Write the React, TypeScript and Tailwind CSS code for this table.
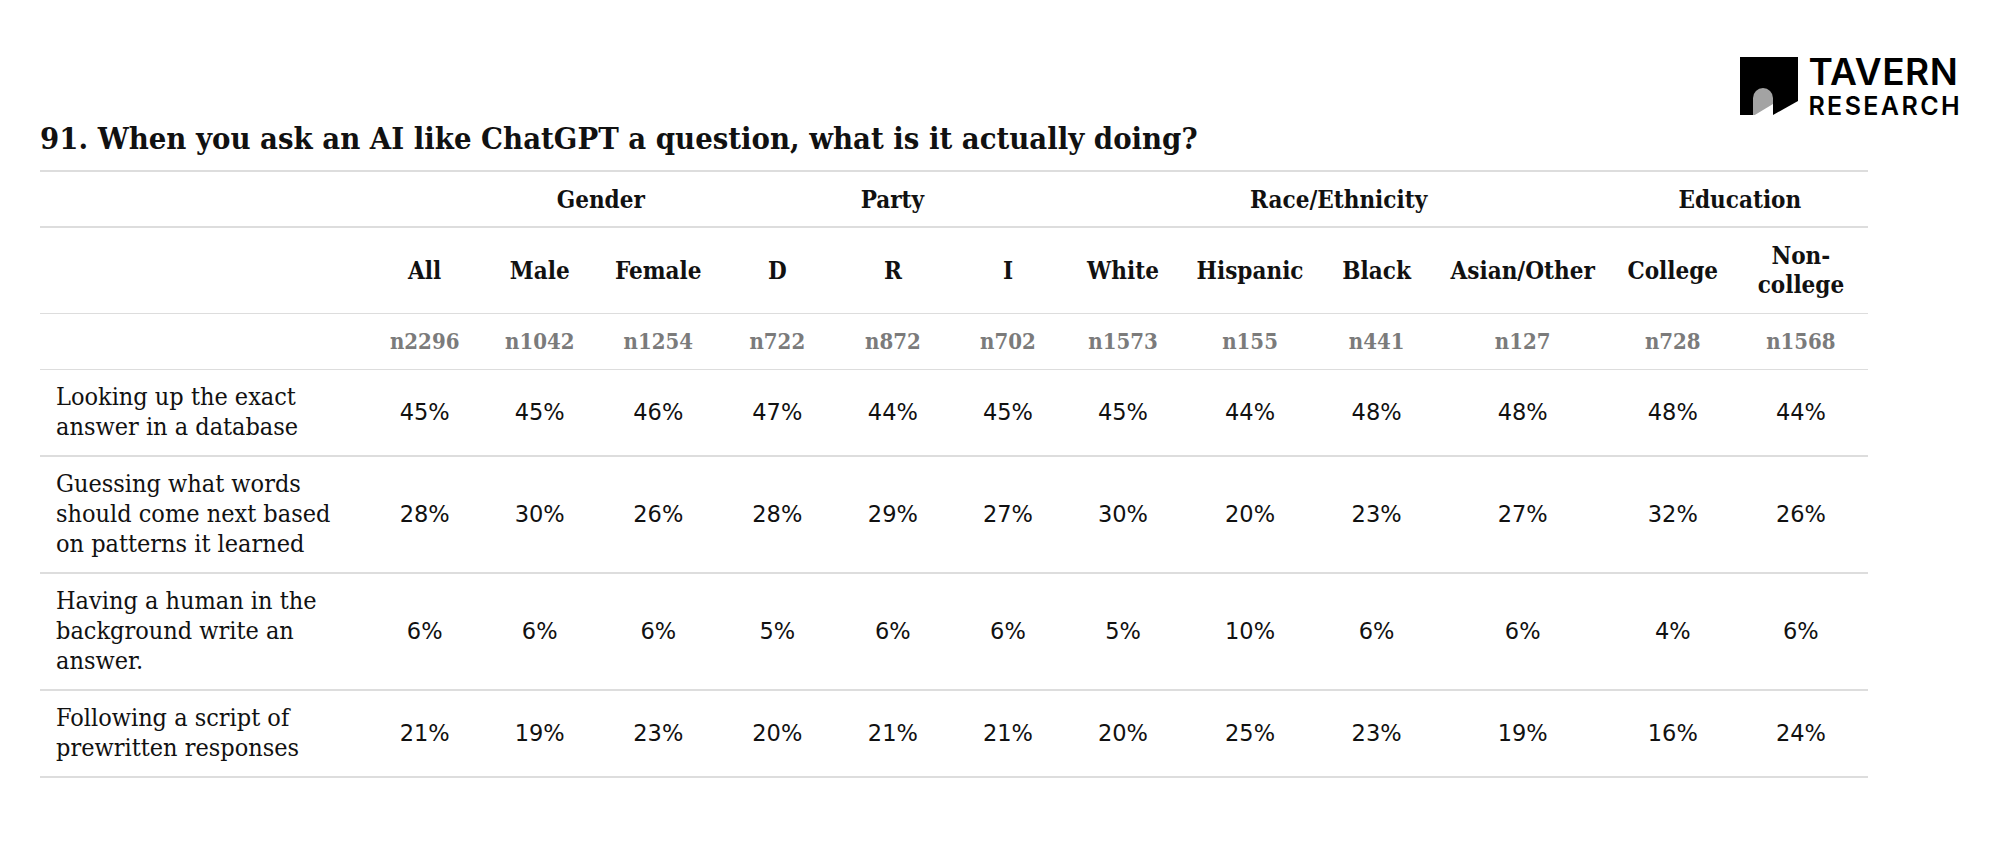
import React from "react";

const cols = [
  { key: "All", w: "w-[115px]" },
  { key: "Male", w: "w-[115px]" },
  { key: "Female", w: "w-[122px]" },
  { key: "D", w: "w-[116px]" },
  { key: "R", w: "w-[115px]" },
  { key: "I", w: "w-[115px]" },
  { key: "White", w: "w-[115px]" },
  { key: "Hispanic", w: "w-[139px]" },
  { key: "Black", w: "w-[114px]" },
  { key: "Asian/Other", w: "w-[178px]" },
  { key: "College", w: "w-[122px]" },
  { key: "Non-college", w: "w-[134px]" },
];

const ns = ["n2296", "n1042", "n1254", "n722", "n872", "n702", "n1573", "n155", "n441", "n127", "n728", "n1568"];

const rows: { label: string[]; vals: number[] }[] = [
  { label: ["Looking up the exact", "answer in a database"], vals: [45, 45, 46, 47, 44, 45, 45, 44, 48, 48, 48, 44] },
  { label: ["Guessing what words", "should come next based", "on patterns it learned"], vals: [28, 30, 26, 28, 29, 27, 30, 20, 23, 27, 32, 26] },
  { label: ["Having a human in the", "background write an", "answer."], vals: [6, 6, 6, 5, 6, 6, 5, 10, 6, 6, 4, 6] },
  { label: ["Following a script of", "prewritten responses"], vals: [21, 19, 23, 20, 21, 21, 20, 25, 23, 19, 16, 24] },
];

function Logo() {
  return (
    <div className="flex self-start items-center gap-[10px]">
      <svg width="58" height="58" viewBox="0 0 58 58">
        <polygon points="0,0 58,0 58,44 33,58 0,58" fill="#000" />
        <path d="M13,58 V41 A10,10 0 0 1 33,41 V58 Z" fill="#a3a3a3" />
        <polygon points="33,47 33,58.5 14,58.5" fill="#fff" />
      </svg>
      <div className="flex flex-col font-['Inter',sans-serif] text-black">
        <span className="text-[37px] leading-none font-semibold tracking-[0.5px]">TAVERN</span>
        <span className="mt-[3.6px] text-[25px] leading-none font-semibold tracking-[2.4px]">RESEARCH</span>
      </div>
    </div>
  );
}

const serif = "font-['DejaVu_Serif_Condensed','DejaVu_Serif',serif] font-stretch-condensed";

export default function App() {
  return (
    <div className={`w-[2008px] h-[852px] bg-white text-[#111] pt-[53px] pl-[40px] ${serif}`}>
      <div className="flex justify-between w-[1922px]">
        <h1 className="mt-[67px] text-[30.7px] leading-[36px] font-bold whitespace-nowrap">
          91. When you ask an AI like ChatGPT a question, what is it actually doing?
        </h1>
        <Logo />
      </div>
      <table className="mt-[14px] w-[1828px] table-fixed border-separate border-spacing-0">
        <colgroup>
          <col className="w-[327px]" />
          {cols.map((c) => (
            <col key={c.key} className={c.w} />
          ))}
        </colgroup>
        <thead>
          <tr className="text-[24px] leading-[29px] font-bold">
            <th className="border-t-2 border-b-2 border-[#dddddd] py-[12.5px]"></th>
            <th className="border-t-2 border-b-2 border-[#dddddd] py-[12.5px]"></th>
            <th colSpan={2} className="border-t-2 border-b-2 border-[#dddddd] py-[12.5px] text-center">Gender</th>
            <th colSpan={3} className="border-t-2 border-b-2 border-[#dddddd] py-[12.5px] text-center">Party</th>
            <th colSpan={4} className="border-t-2 border-b-2 border-[#dddddd] py-[12.5px] text-center">Race/Ethnicity</th>
            <th colSpan={2} className="border-t-2 border-b-2 border-[#dddddd] py-[12.5px] text-center">Education</th>
          </tr>
          <tr className="text-[24px] leading-[29px] font-bold">
            <th className="border-b border-[#dddddd] pt-[13px] pb-[13.5px]"></th>
            {cols.map((c) => (
              <th key={c.key} className="border-b border-[#dddddd] pt-[13px] pb-[13.5px] text-center align-middle whitespace-nowrap">
                {c.key === "Non-college" ? (
                  <>
                    Non-
                    <br />
                    college
                  </>
                ) : (
                  c.key
                )}
              </th>
            ))}
          </tr>
          <tr className="text-[22px] leading-[29px] font-bold text-[#7b7b7b]">
            <th className="border-b border-[#dddddd] py-[13px]"></th>
            {ns.map((n) => (
              <th key={n} className="border-b border-[#dddddd] py-[13px] text-center">
                {n}
              </th>
            ))}
          </tr>
        </thead>
        <tbody>
          {rows.map((r, i) => (
            <tr key={i}>
              <td className="border-b-2 border-[#dddddd] py-[12.5px] pl-[16px] text-[25px] leading-[30px] whitespace-nowrap align-middle">
                {r.label.map((l, j) => (
                  <div key={j}>{l}</div>
                ))}
              </td>
              {r.vals.map((v, j) => (
                <td
                  key={j}
                  className="border-b-2 border-[#dddddd] py-[12.5px] text-center align-middle text-[22.5px] leading-[30px] font-['DejaVu_Sans',sans-serif] font-stretch-normal"
                >
                  {v}%
                </td>
              ))}
            </tr>
          ))}
        </tbody>
      </table>
    </div>
  );
}
